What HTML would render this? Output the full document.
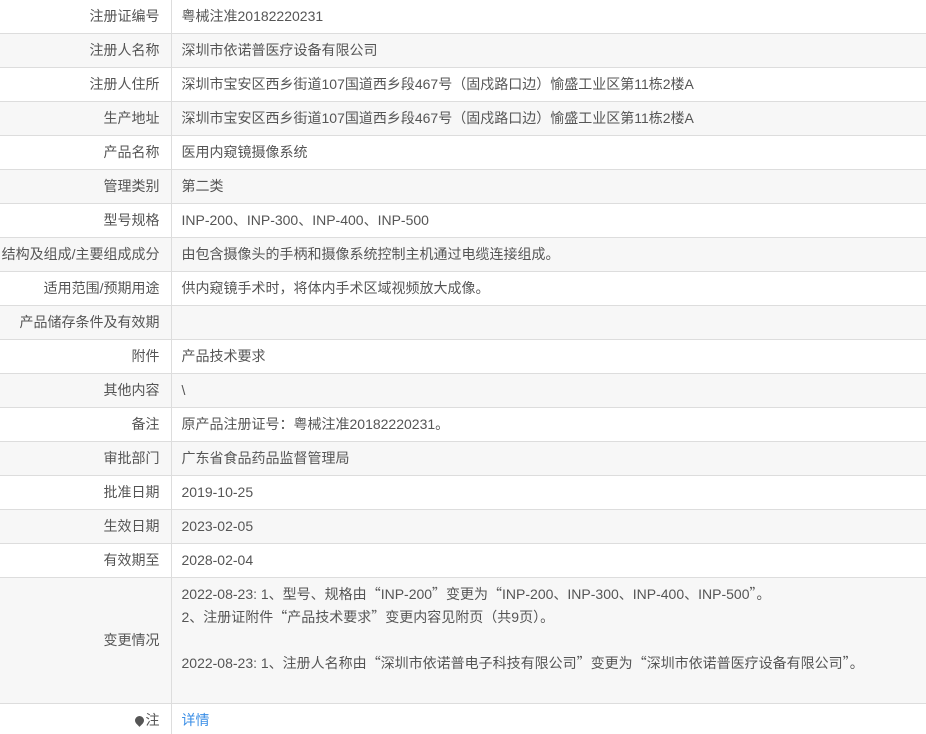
<!DOCTYPE html>
<html><head><meta charset="utf-8"><style>
*{margin:0;padding:0;box-sizing:border-box}
body{width:926px;height:734px;overflow:hidden;background:#fff;font-family:"Liberation Sans","Noto Sans CJK SC",sans-serif;font-size:14px;color:#555}
table{border-collapse:collapse;width:926px}
td{border-bottom:1px solid #ddd;height:34px;vertical-align:middle;padding:0 10px;white-space:nowrap}
tr:first-child td{height:33px}
td.l{width:171px;text-align:right;border-right:1px solid #ddd;padding:0 11px}
tr:nth-child(even) td{background:#f7f7f7}
.c td{height:126px}
.c .v{vertical-align:top;padding-top:5px;line-height:23px}
tr:last-child td{border-bottom:none;height:31px;padding-top:3px}
a{color:#3a8ee6;text-decoration:none}
.q{font-family:"Noto Sans CJK SC",sans-serif}
.pin{display:inline-block;width:9px;height:9px;background:#555;border-radius:50% 50% 50% 0;transform:rotate(-45deg);margin-right:2px;vertical-align:0}
</style></head><body>
<table>
<tr><td class="l">注册证编号</td><td>粤械注准20182220231</td></tr>
<tr><td class="l">注册人名称</td><td>深圳市依诺普医疗设备有限公司</td></tr>
<tr><td class="l">注册人住所</td><td>深圳市宝安区西乡街道107国道西乡段467号（固戍路口边）愉盛工业区第11栋2楼A</td></tr>
<tr><td class="l">生产地址</td><td>深圳市宝安区西乡街道107国道西乡段467号（固戍路口边）愉盛工业区第11栋2楼A</td></tr>
<tr><td class="l">产品名称</td><td>医用内窥镜摄像系统</td></tr>
<tr><td class="l">管理类别</td><td>第二类</td></tr>
<tr><td class="l">型号规格</td><td>INP-200、INP-300、INP-400、INP-500</td></tr>
<tr><td class="l" style="padding:0 11px 0 0">结构及组成/主要组成成分</td><td>由包含摄像头的手柄和摄像系统控制主机通过电缆连接组成。</td></tr>
<tr><td class="l">适用范围/预期用途</td><td>供内窥镜手术时，将体内手术区域视频放大成像。</td></tr>
<tr><td class="l">产品储存条件及有效期</td><td></td></tr>
<tr><td class="l">附件</td><td>产品技术要求</td></tr>
<tr><td class="l">其他内容</td><td>\</td></tr>
<tr><td class="l">备注</td><td>原产品注册证号：粤械注准20182220231。</td></tr>
<tr><td class="l">审批部门</td><td>广东省食品药品监督管理局</td></tr>
<tr><td class="l">批准日期</td><td>2019-10-25</td></tr>
<tr><td class="l">生效日期</td><td>2023-02-05</td></tr>
<tr><td class="l">有效期至</td><td>2028-02-04</td></tr>
<tr class="c"><td class="l">变更情况</td><td class="v">2022-08-23: 1、型号、规格由<span class="q">“</span>INP-200<span class="q">”</span>变更为<span class="q">“</span>INP-200、INP-300、INP-400、INP-500<span class="q">”</span>。<br>2、注册证附件<span class="q">“</span>产品技术要求<span class="q">”</span>变更内容见附页（共9页）。<br><br>2022-08-23: 1、注册人名称由<span class="q">“</span>深圳市依诺普电子科技有限公司<span class="q">”</span>变更为<span class="q">“</span>深圳市依诺普医疗设备有限公司<span class="q">”</span>。</td></tr>
<tr><td class="l"><span class="pin"></span>注</td><td><a>详情</a></td></tr>
</table>
</body></html>
